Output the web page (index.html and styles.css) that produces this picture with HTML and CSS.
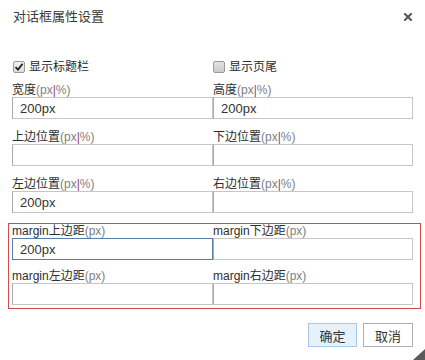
FILE: index.html
```html
<!DOCTYPE html>
<html lang="zh-CN">
<head>
    <meta charset="UTF-8">
    <title>对话框属性设置</title>
    <link rel="stylesheet" href="styles.css">
</head>
<body>
    <div class="dialog">
        <div class="dialog-head">
            <span class="dialog-title">对话框属性设置</span>
            <svg class="dialog-close" width="8" height="8" viewBox="0 0 8 8">
                <path d="M1 1L7 7M7 1L1 7" stroke="#555" stroke-width="2" stroke-linecap="square"/>
            </svg>
        </div>

        <div class="dialog-body">
            <div class="options">
                <label class="check-item">
                    <span class="check-box checked">
                        <svg width="10" height="10" viewBox="0 0 10 10"><path d="M1.5 5.2L4 7.6L8.6 1.8" fill="none" stroke="#222" stroke-width="1.8"/></svg>
                    </span>
                    显示标题栏
                </label>
                <label class="check-item">
                    <span class="check-box"></span>
                    显示页尾
                </label>
            </div>

            <div class="fields">
                <div class="field">
                    <label>宽度<span class="unit">(px<i>|</i>%)</span></label>
                    <input type="text" value="200px">
                </div>
                <div class="field">
                    <label>高度<span class="unit">(px<i>|</i>%)</span></label>
                    <input type="text" value="200px">
                </div>
                <div class="field">
                    <label>上边位置<span class="unit">(px<i>|</i>%)</span></label>
                    <input type="text">
                </div>
                <div class="field">
                    <label>下边位置<span class="unit">(px<i>|</i>%)</span></label>
                    <input type="text">
                </div>
                <div class="field">
                    <label>左边位置<span class="unit">(px<i>|</i>%)</span></label>
                    <input type="text" value="200px">
                </div>
                <div class="field">
                    <label>右边位置<span class="unit">(px<i>|</i>%)</span></label>
                    <input type="text">
                </div>
            </div>

            <div class="fields margin-box">
                <div class="field">
                    <label>margin上边距<span class="unit">(px)</span></label>
                    <input type="text" value="200px" class="focused">
                </div>
                <div class="field">
                    <label>margin下边距<span class="unit">(px)</span></label>
                    <input type="text">
                </div>
                <div class="field">
                    <label>margin左边距<span class="unit">(px)</span></label>
                    <input type="text">
                </div>
                <div class="field">
                    <label>margin右边距<span class="unit">(px)</span></label>
                    <input type="text">
                </div>
            </div>
        </div>

        <div class="dialog-foot">
            <button class="btn btn-ok">确定</button>
            <button class="btn">取消</button>
        </div>

        <div class="resize-grip"></div>
    </div>
</body>
</html>
```

FILE: styles.css
```css
body {
    margin: 0;
    background-color: #ffffff;
    font-family: "Liberation Sans", "Noto Sans CJK SC", sans-serif;
    font-size: 12px;
    color: #333333;
}

.dialog {
    width: 425px;
    height: 360px;
    position: relative;
    box-sizing: border-box;
}

.dialog-head {
    display: flex;
    justify-content: space-between;
    align-items: center;
    padding: 9px 13px 0 13px;
    height: 16px;
}

.dialog-title {
    font-size: 13px;
    line-height: 16px;
    color: #3a3a3a;
}

.dialog-close {
    display: block;
}

.dialog-body {
    padding: 0 12px;
}

.options {
    display: grid;
    grid-template-columns: 201px 200px;
    margin-top: 36px;
    height: 12px;
}

.check-item {
    display: flex;
    align-items: center;
    gap: 4px;
    line-height: 12px;
    font-size: 12px;
    color: #2a2a2a;
}

.options .check-item:first-child {
    margin-left: 1px;
}

.check-box {
    width: 10px;
    height: 10px;
    border: 1px solid #9a9a9a;
    border-radius: 2px;
    background: linear-gradient(#e2e2e2, #cccccc);
    display: flex;
    align-items: center;
    justify-content: center;
}

.check-box.checked {
    background: linear-gradient(#f2f2f2, #dcdcdc);
}

.fields {
    display: grid;
    grid-template-columns: 201px 200px;
    row-gap: 11px;
    margin-top: 10px;
}

.field label {
    display: block;
    height: 14px;
    line-height: 14px;
    font-size: 12px;
    color: #2e2e2e;
    white-space: nowrap;
}

.unit {
    color: #808080;
}

.unit i {
    font-style: normal;
    color: #9a3a78;
}

.field input {
    display: block;
    width: 100%;
    height: 22px;
    box-sizing: border-box;
    margin: 0;
    padding: 0 7px;
    border: 1px solid #c6c6c6;
    border-left-color: #a9a9a9;
    font-family: "Liberation Sans", sans-serif;
    font-size: 13px;
    color: #333333;
    outline: none;
}

.field input.focused {
    border-color: #5a7cab;
}

.margin-box {
    margin: 10px -8px 0 -4px;
    padding: 0 7px 3px 3px;
    border: 1px solid #d24a4a;
    row-gap: 9px;
}

.dialog-foot {
    display: flex;
    justify-content: flex-end;
    gap: 6px;
    padding: 14px 12px 0 0;
}

.btn {
    height: 24px;
    width: 50px;
    padding: 0;
    border: 1px solid #adadad;
    background-color: #ffffff;
    font-family: "Liberation Sans", "Noto Sans CJK SC", sans-serif;
    font-size: 13px;
    color: #333333;
}

.btn-ok {
    width: 49px;
    background-color: #e5f1fb;
    border-color: #a6c9e8;
}

.resize-grip {
    position: absolute;
    right: 0;
    bottom: 0;
    width: 12px;
    height: 11px;
    background-color: #5a5a5a;
    clip-path: polygon(100% 0, 100% 100%, 0 100%);
}
```
